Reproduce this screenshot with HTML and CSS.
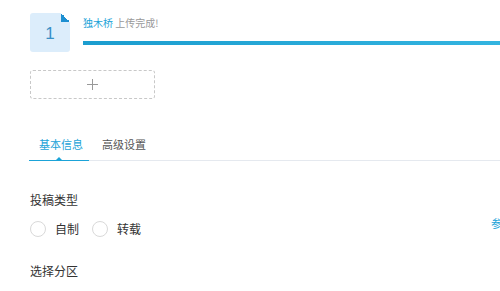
FILE: index.html
```html
<!DOCTYPE html>
<html>
<head>
<meta charset="utf-8">
<link rel="stylesheet" href="styles.css">
</head>
<body>
<div class="page">
  <div class="upload-row">
    <div class="file-icon"><span class="file-num">1</span></div>
    <div class="file-info">
      <div class="file-line"><span class="file-name">独木桥</span> <span class="file-status">上传完成!</span></div>
      <div class="progress"><div class="progress-fill" style="width:100%"></div></div>
    </div>
  </div>
  <div class="add-box"><span class="plus"></span></div>
  <div class="tabs">
    <div class="tab active">基本信息</div>
    <div class="tab">高级设置</div>
  </div>
  <div class="section">
    <div class="label">投稿类型</div>
    <div class="radios">
      <label class="radio"><span class="circle"></span><span class="radio-text">自制</span></label>
      <label class="radio"><span class="circle"></span><span class="radio-text">转载</span></label>
      <span class="ref-link">参考</span>
    </div>
  </div>
  <div class="section second">
    <div class="label">选择分区</div>
  </div>
</div>
</body>
</html>
```
FILE: styles.css
```css
html, body {
  margin: 0;
  padding: 0;
  background: #fff;
  overflow: hidden;
}
body {
  font-family: "Noto Sans CJK SC", "Liberation Sans", sans-serif;
  color: #333;
}
.page {
  width: 500px;
  height: 291px;
  padding-left: 30px;
  box-sizing: border-box;
  overflow: hidden;
}
.upload-row {
  display: flex;
  padding-top: 13px;
  gap: 13px;
}
.file-icon {
  position: relative;
  width: 40px;
  height: 39px;
  background: #dcedfb;
  border-radius: 3px;
  display: flex;
  align-items: center;
  justify-content: center;
}
.file-icon::after {
  content: "";
  position: absolute;
  top: 0;
  right: 0;
  width: 9px;
  height: 9px;
  background: linear-gradient(to bottom left, #fff 50%, #1d8fd1 50%);
}
.file-num {
  font-family: "Liberation Sans", sans-serif;
  font-size: 17px;
  color: #3a90c6;
  padding-top: 2px;
}
.file-info {
  flex: 1;
  padding-top: 3px;
}
.file-line {
  font-size: 10px;
  line-height: 14px;
  height: 14px;
}
.file-name {
  color: #1ba3d8;
}
.file-status {
  color: #999;
}
.progress {
  margin-top: 11px;
  height: 4px;
  background: #e8f4fa;
}
.progress-fill {
  height: 100%;
  background: linear-gradient(to right, #1b9dcf, #33b4e0);
}
.add-box {
  margin-top: 18px;
  width: 125px;
  height: 29px;
  box-sizing: border-box;
  border: 1px dashed #c8c8c8;
  border-radius: 3px;
  display: flex;
  align-items: center;
  justify-content: center;
}
.plus {
  position: relative;
  width: 11px;
  height: 11px;
}
.plus::before, .plus::after {
  content: "";
  position: absolute;
  background: #999;
}
.plus::before {
  left: 5px;
  top: 0;
  width: 1px;
  height: 11px;
}
.plus::after {
  top: 5px;
  left: 0;
  width: 11px;
  height: 1px;
}
.tabs {
  margin-top: 37px;
  display: flex;
  border-bottom: 1px solid #e5e9ef;
  margin-left: -1px;
}
.tab {
  position: relative;
  font-size: 11px;
  line-height: 16px;
  padding: 0 6px 8px 10px;
  margin-right: 3px;
  color: #555;
}
.tab.active {
  color: #1ba3d8;
}
.tab.active::after {
  content: "";
  position: absolute;
  left: 0;
  right: 0;
  bottom: -1px;
  height: 1px;
  background: #1ba3d8;
}
.tab.active::before {
  content: "";
  position: absolute;
  left: 50%;
  bottom: 0;
  margin-left: -3px;
  border-left: 3px solid transparent;
  border-right: 3px solid transparent;
  border-bottom: 3px solid #1ba3d8;
}
.section {
  margin-top: 30px;
}
.label {
  font-size: 12px;
  line-height: 18px;
  color: #333;
}
.radios {
  margin-top: 11px;
  display: flex;
  align-items: center;
  position: relative;
  height: 17px;
}
.radio {
  display: flex;
  align-items: center;
  margin-right: 13px;
}
.circle {
  width: 16px;
  height: 16px;
  box-sizing: border-box;
  border: 1px solid #d9d9d9;
  border-radius: 50%;
  margin-right: 9px;
}
.radio-text {
  font-size: 12px;
  line-height: 17px;
  color: #333;
}
.ref-link {
  position: absolute;
  left: 461px;
  top: -5px;
  font-size: 11px;
  color: #1ba3d8;
  white-space: nowrap;
}
.second {
  margin-top: 25px;
}
```
